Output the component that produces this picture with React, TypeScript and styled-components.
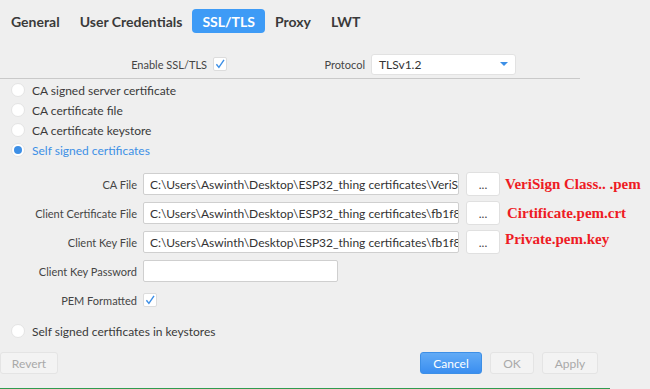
import { Fragment } from "react";
import styled, { createGlobalStyle } from "styled-components";

const GlobalStyle = createGlobalStyle`
  body {
    margin: 0;
    background: #efefef;
    font-family: Lato, "Open Sans", sans-serif;
  }
`;

const Page = styled.div`
  width: 650px;
  height: 389px;
  display: flex;
  flex-direction: column;
  background: #efefef;
  position: relative;
  overflow: hidden;
`;

const TabBar = styled.div`
  display: flex;
  align-items: center;
  padding: 9px 0 0 1px;
  height: 24px;
`;

const Tab = styled.div<{ $active?: boolean }>`
  height: 24px;
  display: flex;
  align-items: center;
  padding: 0 10px;
  border-radius: 4px;
  font-size: 14px;
  font-weight: 700;
  color: ${(p) => (p.$active ? "#ffffff" : "#3a3a3a")};
  background: ${(p) => (p.$active ? "#3e9bf6" : "transparent")};
`;

const TopRow = styled.div`
  display: grid;
  grid-template-columns: 227px 289px;
  margin-top: 20px;
  height: 22px;
`;

const Cell = styled.div`
  display: flex;
  align-items: center;
  justify-content: flex-end;
  gap: 6px;
`;

const Label = styled.span`
  font-size: 11px;
  color: #454545;
  white-space: nowrap;
`;

const CheckBox = styled.div`
  width: 14px;
  height: 14px;
  box-sizing: border-box;
  background: #fff;
  border: 1px solid #dcdcdc;
  border-radius: 2px;
  display: flex;
  align-items: center;
  justify-content: center;
`;

const Select = styled.div`
  width: 145px;
  height: 21px;
  box-sizing: border-box;
  background: #fff;
  border: 1px solid #e2e2e2;
  border-radius: 3px;
  display: flex;
  align-items: center;
  justify-content: space-between;
  padding: 0 7px 0 7px;
  font-size: 12px;
  color: #333;
`;

const Caret = styled.div`
  width: 0;
  height: 0;
  border-left: 4px solid transparent;
  border-right: 4px solid transparent;
  border-top: 4px solid #3d8fe6;
`;

const Separator = styled.div`
  width: 580px;
  height: 1px;
  background: #c9c9c9;
  margin-top: 3px;
`;

const RadioList = styled.div`
  display: flex;
  flex-direction: column;
  margin-top: 1px;
`;

const RadioRow = styled.div<{ $gapTop?: number }>`
  display: flex;
  align-items: center;
  height: 20px;
  padding-left: 11px;
  gap: 7px;
  margin-top: ${(p) => p.$gapTop ?? 0}px;
`;

const RadioCircle = styled.div`
  width: 14px;
  height: 14px;
  box-sizing: border-box;
  border-radius: 50%;
  background: #fff;
  border: 1px solid #e4e4e4;
  display: flex;
  align-items: center;
  justify-content: center;
`;

const RadioDot = styled.div`
  width: 8px;
  height: 8px;
  border-radius: 50%;
  background: #3d8fe6;
`;

const RadioText = styled.span<{ $active?: boolean }>`
  font-size: 12px;
  color: ${(p) => (p.$active ? "#3d8fe6" : "#3a3a3a")};
`;

const Form = styled.div`
  display: grid;
  grid-template-columns: 137px 316px 34px auto;
  grid-auto-rows: 22px;
  column-gap: 6px;
  row-gap: 7px;
  margin-top: 13px;
  align-items: center;
`;

const FormLabel = styled(Label)`
  text-align: right;
`;

const Input = styled.div<{ $width?: number }>`
  width: ${(p) => (p.$width ? `${p.$width}px` : "100%")};
  height: 22px;
  box-sizing: border-box;
  background: #fff;
  border: 1px solid #cfcfcf;
  border-radius: 2px;
  padding: 0 0 0 6px;
  display: flex;
  align-items: center;
  overflow: hidden;
`;

const InputText = styled.span`
  flex: 1;
  min-width: 0;
  overflow: hidden;
  white-space: nowrap;
  text-overflow: clip;
  font-size: 12px;
  color: #333;
`;

const WideInput = styled(Input)`
  grid-column: span 3;
`;

const BrowseButton = styled.div`
  width: 34px;
  height: 24px;
  box-sizing: border-box;
  margin-left: 1px;
  background: #fff;
  border: 1px solid #e0e0e0;
  border-radius: 3px;
  display: flex;
  align-items: center;
  justify-content: center;
  font-size: 12px;
  color: #444;
`;

const Note = styled.span<{ $shift?: number; $lift?: number }>`
  font-family: "Liberation Serif", "Times New Roman", serif;
  font-weight: 700;
  font-size: 15px;
  color: #ee1b24;
  white-space: nowrap;
  margin-left: ${(p) => p.$shift ?? 1}px;
  margin-top: ${(p) => -(p.$lift ?? 0)}px;
`;

const CheckCell = styled.div`
  grid-column: span 3;
  display: flex;
  align-items: center;
`;

const ButtonBar = styled.div`
  display: flex;
  align-items: center;
  margin-top: 11px;
  height: 22px;
`;

const Button = styled.div<{ $primary?: boolean; $width: number }>`
  width: ${(p) => p.$width}px;
  height: 22px;
  box-sizing: border-box;
  border-radius: 3px;
  display: flex;
  align-items: center;
  justify-content: center;
  font-size: 12px;
  color: ${(p) => (p.$primary ? "#fff" : "#a9a9a9")};
  background: ${(p) =>
    p.$primary ? "linear-gradient(#62abf6, #3a8ef0)" : "#f3f3f3"};
  border: 1px solid ${(p) => (p.$primary ? "#3d8fe6" : "#e4e4e4")};
`;

const Spacer = styled.div`
  flex: 1;
`;

const RightButtons = styled.div`
  display: flex;
  gap: 8px;
  margin-right: 52px;
`;

const GreenLine = styled.div`
  position: absolute;
  left: 0;
  bottom: 0;
  width: 610px;
  height: 1px;
  background: #2f9b4e;
`;

const Tick = () => (
  <svg width="12" height="12" viewBox="0 0 12 12">
    <path d="M2.4 6.2 L4.9 9.4 L10 1.8" fill="none" stroke="#3d8fe6" strokeWidth="1.4" />
  </svg>
);

const radios = [
  "CA signed server certificate",
  "CA certificate file",
  "CA certificate keystore",
];

const path = "C:\\Users\\Aswinth\\Desktop\\ESP32_thing certificates\\";

const files = [
  { label: "CA File", file: "VeriS", note: "VeriSign Class.. .pem", shift: 0, lift: 0 },
  { label: "Client Certificate File", file: "fb1f8", note: "Cirtificate.pem.crt", shift: 2, lift: 0 },
  { label: "Client Key File", file: "fb1f8", note: "Private.pem.key", shift: 0, lift: 5 },
];

export default function App() {
  return (
    <Page>
      <GlobalStyle />
      <TabBar>
        <Tab>General</Tab>
        <Tab>User Credentials</Tab>
        <Tab $active>SSL/TLS</Tab>
        <Tab>Proxy</Tab>
        <Tab>LWT</Tab>
      </TabBar>
      <TopRow>
        <Cell>
          <Label>Enable SSL/TLS</Label>
          <CheckBox>
            <Tick />
          </CheckBox>
        </Cell>
        <Cell>
          <Label>Protocol</Label>
          <Select>
            TLSv1.2
            <Caret />
          </Select>
        </Cell>
      </TopRow>
      <Separator />
      <RadioList>
        {radios.map((r) => (
          <RadioRow key={r}>
            <RadioCircle />
            <RadioText>{r}</RadioText>
          </RadioRow>
        ))}
        <RadioRow>
          <RadioCircle>
            <RadioDot />
          </RadioCircle>
          <RadioText $active>Self signed certificates</RadioText>
        </RadioRow>
      </RadioList>
      <Form>
        {files.map((f) => (
          <Fragment key={f.label}>
            <FormLabel>{f.label}</FormLabel>
            <Input>
              <InputText>{path + f.file}</InputText>
            </Input>
            <BrowseButton>...</BrowseButton>
            <Note $shift={f.shift} $lift={f.lift}>
              {f.note}
            </Note>
          </Fragment>
        ))}
        <FormLabel>Client Key Password</FormLabel>
        <WideInput $width={195} />
        <FormLabel>PEM Formatted</FormLabel>
        <CheckCell>
          <CheckBox>
            <Tick />
          </CheckBox>
        </CheckCell>
      </Form>
      <RadioRow $gapTop={10}>
        <RadioCircle />
        <RadioText>Self signed certificates in keystores</RadioText>
      </RadioRow>
      <ButtonBar>
        <Button $width={58}>Revert</Button>
        <Spacer />
        <RightButtons>
          <Button $primary $width={62}>Cancel</Button>
          <Button $width={44}>OK</Button>
          <Button $width={56}>Apply</Button>
        </RightButtons>
      </ButtonBar>
      <GreenLine />
    </Page>
  );
}
